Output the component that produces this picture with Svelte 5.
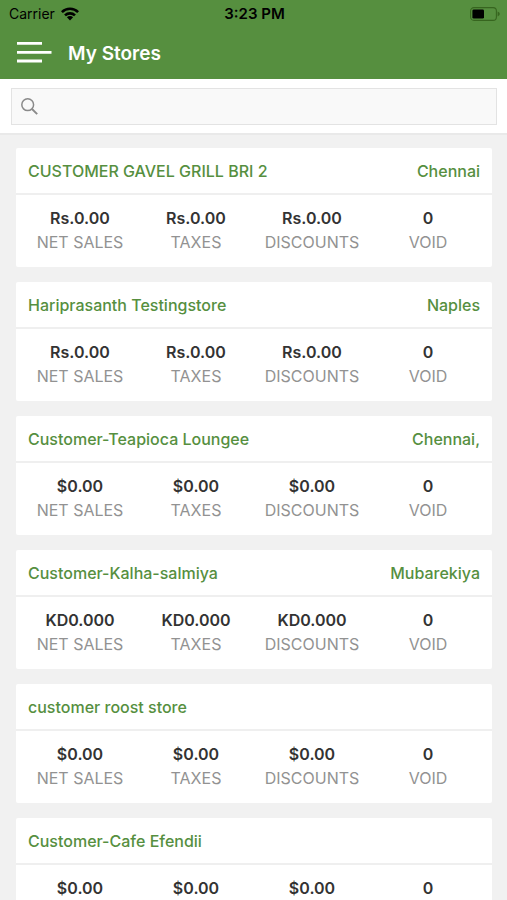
<script>
  const stores = [
    { name: 'CUSTOMER GAVEL GRILL BRI 2', city: 'Chennai', amount: 'Rs.0.00' },
    { name: 'Hariprasanth Testingstore', city: 'Naples', amount: 'Rs.0.00' },
    { name: 'Customer-Teapioca Loungee', city: 'Chennai,', amount: '$0.00' },
    { name: 'Customer-Kalha-salmiya', city: 'Mubarekiya', amount: 'KD0.000' },
    { name: 'customer roost store', city: '', amount: '$0.00' },
    { name: 'Customer-Cafe Efendii', city: '', amount: '$0.00' }
  ];

  let query = $state('');
  const visible = $derived(
    stores.filter((s) => s.name.toLowerCase().includes(query.trim().toLowerCase()))
  );

  const figures = (store) => [
    { label: 'NET SALES', value: store.amount },
    { label: 'TAXES', value: store.amount },
    { label: 'DISCOUNTS', value: store.amount },
    { label: 'VOID', value: '0' }
  ];
</script>

<div class="app">
  <header>
    <div class="status">
      <div class="carrier">
        <span>Carrier</span>
        <svg width="18" height="14" viewBox="0 0 18 14" aria-hidden="true">
          <g fill="none" stroke="#000" stroke-width="2.6">
            <path d="M0.9 5.1 A11.6 11.6 0 0 1 17.1 5.1" />
            <path d="M4 8.4 A7.2 7.2 0 0 1 14 8.4" />
          </g>
          <path d="M5.9 10.3 A4.4 4.4 0 0 1 12.1 10.3 L9 13.5 Z" fill="#000" />
        </svg>
      </div>
      <time>3:23 PM</time>
      <svg class="battery" width="30" height="14" viewBox="0 0 30 14" aria-hidden="true">
        <rect x="0.6" y="0.6" width="25.8" height="12.8" rx="3.4" fill="none" stroke="#37651f" stroke-width="1.1" />
        <rect x="2.4" y="2.4" width="11.6" height="9.2" rx="1.4" fill="#000" />
        <path d="M27.6 4.6 Q29.8 5.6 29.8 7 Q29.8 8.4 27.6 9.4 Z" fill="#37651f" />
      </svg>
    </div>
    <div class="bar">
      <button class="menu" type="button" aria-label="Menu">
        <svg width="35" height="22" viewBox="0 0 35 22" aria-hidden="true">
          <path d="M0 1.4H25M0 10.4H34.5M0 19H25" stroke="#fff" stroke-width="2.8" />
        </svg>
      </button>
      <h1>My Stores</h1>
    </div>
  </header>

  <div class="search">
    <label class="field">
      <svg width="17" height="17" viewBox="0 0 17 17" fill="none" stroke="#8a8a8a" aria-hidden="true">
        <circle cx="6.7" cy="6.7" r="5.9" stroke-width="1.5" />
        <path d="M11 11L16.2 16.2" stroke-width="1.9" />
      </svg>
      <input type="search" aria-label="Search stores" bind:value={query} />
    </label>
  </div>

  <main>
    {#each visible as store (store.name)}
      <article>
        <div class="title">
          <h2>{store.name}</h2>
          <span>{store.city}</span>
        </div>
        <dl>
          {#each figures(store) as figure}
            <div>
              <dt>{figure.label}</dt>
              <dd>{figure.value}</dd>
            </div>
          {/each}
        </dl>
      </article>
    {/each}
  </main>
</div>

<style>
  :global(body) {
    margin: 0;
    background: #f1f1f1;
  }

  .app {
    display: flex;
    flex-direction: column;
    height: 100vh;
    font-family: Inter, 'Liberation Sans', sans-serif;
    color: #333;
  }

  header {
    flex: none;
    background: #568f3f;
  }

  .status {
    display: grid;
    grid-template-columns: 1fr auto 1fr;
    align-items: center;
    height: 27px;
    padding: 0 7px 0 9px;
    font-size: 14px;
    color: #000;
  }

  .carrier {
    display: flex;
    align-items: center;
    gap: 6px;
  }

  time {
    font-size: 15px;
    font-weight: 600;
  }

  .battery {
    justify-self: end;
  }

  .bar {
    display: flex;
    align-items: center;
    gap: 16px;
    height: 52px;
    padding: 0 17px;
  }

  .menu {
    display: flex;
    padding: 0;
    border: 0;
    background: none;
    cursor: pointer;
  }

  h1 {
    margin: 0;
    font-size: 19px;
    font-weight: 600;
    color: #fff;
  }

  .search {
    flex: none;
    padding: 9px 10px 8px 11px;
    border-bottom: 2px solid #e9e9e9;
    background: #fff;
  }

  .field {
    display: flex;
    align-items: center;
    gap: 8px;
    height: 35px;
    padding: 0 9px;
    border: 1px solid #e3e3e3;
    background: #f9f9f9;
  }

  input {
    flex: 1;
    min-width: 0;
    border: 0;
    outline: 0;
    background: none;
    font: inherit;
    font-size: 15px;
    color: inherit;
  }

  main {
    flex: 1;
    display: flex;
    flex-direction: column;
    gap: 15px;
    min-height: 0;
    padding: 13px 15px 15px 16px;
    overflow-y: auto;
    scrollbar-width: none;
  }

  article {
    flex: none;
    border-radius: 2px;
    background: #fff;
  }

  .title {
    display: flex;
    align-items: center;
    justify-content: space-between;
    height: 45px;
    padding: 0 12px;
    border-bottom: 2px solid #efefef;
    font-size: 16px;
    font-weight: 500;
    color: #568f3f;
  }

  h2 {
    margin: 0;
    font: inherit;
  }

  dl {
    display: grid;
    grid-template-columns: repeat(4, 1fr);
    margin: 0;
    padding: 11px 6px 13px;
  }

  dl div {
    display: flex;
    flex-direction: column-reverse;
    text-align: center;
    line-height: 24px;
  }

  dt {
    font-size: 16px;
    color: #929292;
  }

  dd {
    margin: 0;
    font-size: 16px;
    font-weight: 600;
  }
</style>
